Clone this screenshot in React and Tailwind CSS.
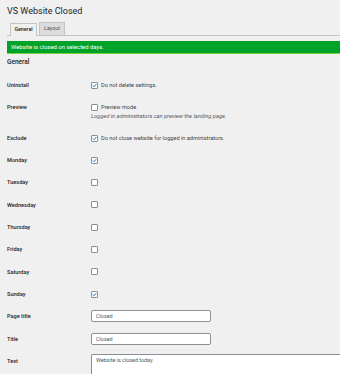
import React from 'react'

const font = { fontFamily: 'Roboto, "Liberation Sans", sans-serif' }

const Check = ({ checked }) => (
	<span className="inline-flex items-center justify-center w-[7px] h-[7px] border border-[#8c8f94] rounded-[1px] bg-white shrink-0">
		{checked && (
			<svg viewBox="0 0 10 10" className="w-[7px] h-[7px]">
				<path d="M1.8 5 L4.2 7.5 L8.6 2.2" fill="none" stroke="#2271b1" strokeWidth="1.9" />
			</svg>
		)}
	</span>
)

const Row = ({ label, children }) => (
	<div className="flex py-[7px]">
		<div className="w-[84px] shrink-0 text-[5.6px] leading-[8.3px] font-medium text-[#1d2327]">{label}</div>
		<div className="flex-1 text-[5.6px] leading-[8.3px] text-[#3c434a]">{children}</div>
	</div>
)

const CheckRow = ({ label, checked, text }) => (
	<Row label={label}>
		<div className="flex items-center h-[8.3px] gap-[3px]">
			<Check checked={checked} />
			{text && <span>{text}</span>}
		</div>
	</Row>
)

const TextRow = ({ label, value }) => (
	<Row label={label}>
		<div className="h-[8.3px] flex items-center">
			<div className="w-[120px] h-[12px] shrink-0 border border-[#8c8f94] rounded-[2px] bg-white pl-[4px] flex items-center text-[5.4px] text-[#50575e]">
				{value}
			</div>
		</div>
	</Row>
)

const days = [
	['Monday', true],
	['Tuesday', false],
	['Wednesday', false],
	['Thursday', false],
	['Friday', false],
	['Saturday', false],
	['Sunday', true],
]

export default function App() {
	return (
		<div className="w-[340px] h-[374px] overflow-hidden bg-[#f0f0f1] pl-[7px]" style={font}>
			<h1 className="pt-[4px] text-[9px] leading-[14px] text-[#1d2327]">VS Website Closed</h1>

			{/* tabs */}
			<div className="flex items-end gap-[2px] pl-[3px] mt-[5px] h-[13px] border-b border-[#c3c4c7]">
				<div className="h-[13px] w-[27px] flex items-center justify-center border border-b-0 border-[#c3c4c7] bg-[#f0f0f1] text-[5.3px] font-medium text-[#1d2327] -mb-px">
					General
				</div>
				<div className="h-[13px] w-[26px] flex items-center justify-center border border-b-0 border-[#c3c4c7] bg-[#dcdcde] text-[5.3px] text-[#50575e]">
					Layout
				</div>
			</div>

			<div className="mt-[5px] h-[13px] flex items-center pl-[4px] bg-[#00a32a] border-b border-[#7ad03a] text-[5.9px] text-white">
				Website is closed on selected days.
			</div>

			<h2 className="mt-[3px] text-[6.5px] leading-[11px] font-medium text-[#1d2327]">General</h2>

			<div className="mt-[6px]">
				<CheckRow label="Uninstall" checked text="Do not delete settings." />
				<Row label="Preview">
					<div className="flex items-center h-[8.3px] gap-[3px]">
						<Check />
						<span>Preview mode</span>
					</div>
					<div className="italic text-[5.7px] text-[#50575e]">Logged in administrators can preview the landing page.</div>
				</Row>
				<CheckRow label="Exclude" checked text="Do not close website for logged in administrators." />
				{days.map(([d, c]) => (
					<CheckRow key={d} label={d} checked={c} />
				))}
				<TextRow label="Page title" value="Closed" />
				<TextRow label="Title" value="Closed" />
				<div className="flex pt-[4px]">
					<div className="w-[84px] shrink-0 pt-[3px] text-[5.6px] leading-[8.3px] font-medium text-[#1d2327]">Text</div>
					<div className="flex-1 h-[40px] border border-[#8c8f94] border-r-0 rounded-l-[2px] bg-white px-[4px] pt-[1px] text-[5.4px] leading-[8px] text-[#50575e]">
						Website is closed today.
					</div>
				</div>
			</div>
		</div>
	)
}
